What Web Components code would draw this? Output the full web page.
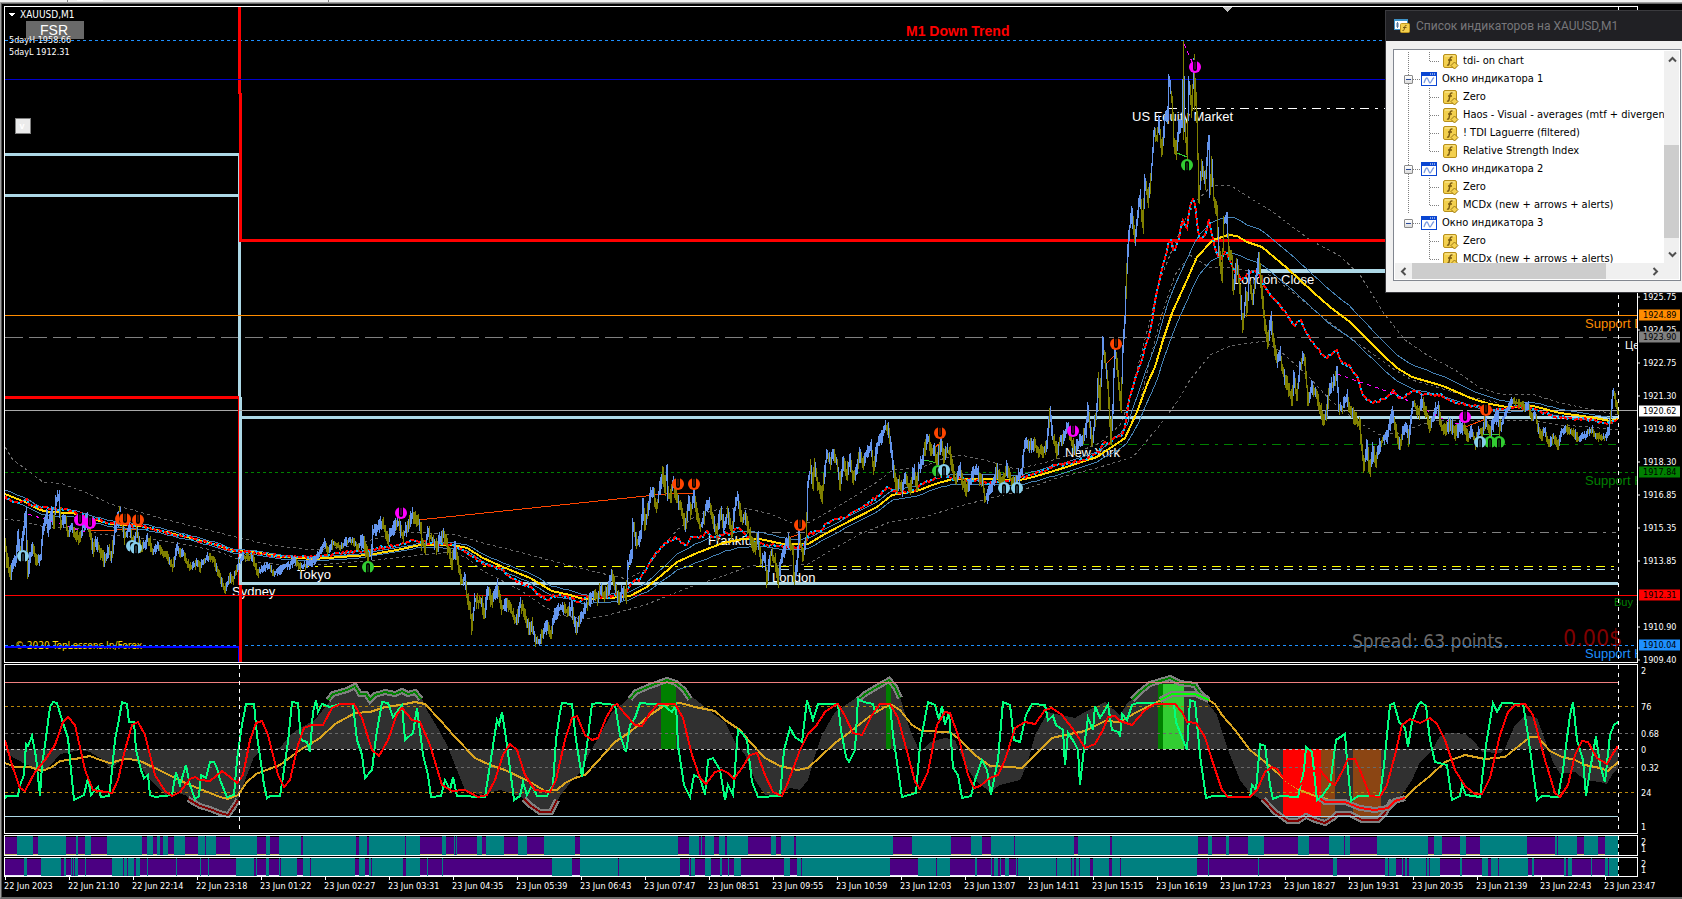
<!DOCTYPE html>
<html lang="ru">
<head>
<meta charset="utf-8">
<title>XAUUSD,M1</title>
<style>
html, body { margin: 0; height: 100%; background: #000; overflow: hidden; }
</style>
</head>
<body>
<trade-terminal></trade-terminal>
<script>
/* Every chart coordinate is a point of the chart space; panes take a window of it as "x y w h". */
const pts = s => s.trim().split(/\s+/).map(p => p.split(',').map(Number));
const line = (s, c, w = 1, dash = '') =>
  `<polyline points="${s}" fill="none" stroke="${c}" stroke-width="${w}" ${dash ? `stroke-dasharray="${dash}"` : ''}/>`;
const hl = (y, x1, x2, c, w = 1, dash = '') => line(`${x1},${w % 2 ? y + 0.5 : y} ${x2},${w % 2 ? y + 0.5 : y}`, c, w, dash);
const vl = (x, y1, y2, c, w = 1, dash = '') => line(`${w % 2 ? x + 0.5 : x},${y1} ${w % 2 ? x + 0.5 : x},${y2}`, c, w, dash);
const rnd = n => { const v = Math.sin(n * 127.1 + 11.7) * 43758.5453; return v - Math.floor(v); };
const at = (p, x) => {
  let i = 1;
  while (i < p.length - 1 && p[i][0] < x) i++;
  const [a, b] = [p[i - 1], p[i]];
  return { y: a[1] + (b[1] - a[1]) * (x - a[0]) / (b[0] - a[0] || 1), d: b[1] - a[1] };
};

const PRICE = `5,541 7,560 10,576 13,566 16,562 18,534 20,553 23,537 26,513 28,573 32,547 37,560 41,557 43,530 47,512 48,530 52,513 54,527 56,500 59,497 61,523 65,517 68,533 72,527 75,535 80,540 83,527 87,517 90,533 93,550 97,542 100,550 105,562 108,550 112,557 115,530 120,513 125,537 130,527 133,547 137,530 142,550 147,540 150,543 153,553 158,545 163,553 168,557 173,567 177,547 180,553 183,552 187,563 192,568 197,562 200,568 203,562 208,557 213,559 217,568 220,577 225,590 230,577 233,580 237,570 239,562 243,557 248,557 253,558 258,573 263,568 268,565 273,573 278,572 283,567 290,565 295,560 300,567 305,565 310,563 315,560 320,553 325,543 328,552 333,543 340,547 345,543 350,540 355,543 358,547 363,540 368,557 372,550 373,533 378,527 382,522 385,530 388,540 392,532 395,527 398,522 403,537 407,527 412,515 417,520 421,527 422,543 425,547 428,533 433,540 437,547 443,533 447,543 452,563 455,547 458,563 462,582 465,577 467,597 470,607 472,628 475,600 482,602 484,617 488,590 492,603 497,587 500,600 502,607 507,605 510,608 517,623 520,603 523,610 530,630 532,623 536,642 540,640 543,632 547,627 551,635 554,617 558,610 563,607 568,612 572,607 574,622 577,627 582,617 585,607 590,600 593,593 597,598 600,590 605,595 608,590 612,575 614,582 619,600 623,590 626,597 628,567 632,553 633,525 637,543 641,537 643,500 645,527 648,510 651,493 653,492 657,507 660,487 663,472 665,490 667,470 668,493 671,497 673,483 677,497 682,510 686,527 689,500 691,512 694,495 697,513 700,527 703,523 706,507 709,502 713,520 717,533 721,510 724,527 728,513 732,533 736,500 738,497 742,520 745,517 748,527 752,543 755,550 758,535 761,562 765,557 767,580 771,553 775,560 778,580 782,557 785,547 788,540 793,548 794,580 797,567 799,533 803,557 806,543 808,483 811,467 813,487 815,463 817,480 822,497 824,480
827,453 830,463 833,455 837,463 840,487 843,463 847,473 850,460 853,477 857,470 860,453 863,463 867,453 871,447 874,470 877,447 882,437 885,427 888,428 891,447 893,467 897,487 899,480 902,490 905,477 910,490 914,470 917,487 919,467 923,460 926,443 928,437 932,453 935,450 937,463 941,443 944,460 947,450 950,453 953,470 956,483 960,467 963,483 967,490 971,480 973,473 977,470 980,480 983,483 985,500 989,493 993,483 997,470 1000,480 1003,483 1007,467 1010,477 1013,483 1017,480 1022,470 1024,450 1027,443 1030,447 1033,443 1038,450 1043,452 1047,445 1050,413 1053,437 1057,452 1060,440 1064,437 1068,427 1071,440 1075,450 1079,443 1083,437 1086,430 1088,410 1090,423 1092,443 1095,423 1097,407 1098,380
1100,403 1103,343 1106,367 1108,387 1111,440 1113,407 1115,343 1118,373 1121,407 1123,350 1125,317 1127,267 1129,233 1132,213 1135,240 1137,220 1140,197 1143,227 1145,180 1148,200 1151,180 1154,133 1157,140 1159,123 1162,150 1165,120 1168,113 1169,77 1172,100 1174,140 1176,153 1179,127 1182,123 1183,83 1184,80 1185,127 1187,153 1189,83 1192,110 1194,65 1197,117 1199,197 1202,167 1205,183 1209,137 1210,193 1212,163 1214,200 1217,213 1219,250 1222,277 1224,223 1227,217 1229,253 1232,257 1233,290 1237,263 1240,290 1243,327 1246,293 1247,310 1249,277 1253,300 1256,277 1259,257 1262,293 1265,323 1268,343 1271,317 1273,340 1277,360 1280,353 1283,373 1287,383 1292,400 1294,377 1297,397 1300,367 1303,357 1305,360 1308,400 1312,387 1317,397 1320,407 1324,420 1327,410 1330,387 1333,383 1337,373 1339,410 1343,407 1347,397 1351,413 1355,417 1358,423
1360,423 1361,440 1364,467 1367,447 1370,472 1373,450 1376,462 1379,447 1383,440 1387,437 1390,423 1393,413 1395,427 1400,447 1403,433 1407,427 1409,440 1413,403 1416,408 1419,413 1422,402 1428,417 1430,427 1432,420 1435,410 1438,407 1442,427 1445,430 1450,423 1456,433 1462,426 1468,437 1472,433 1476,442 1479,430 1482,433 1486,420 1490,432 1494,423 1498,413 1500,430 1503,420 1507,410 1512,400 1517,403 1522,404 1525,408 1528,405 1532,417 1535,413 1538,427 1541,438 1545,430 1549,445 1553,437 1556,440 1558,447 1561,433 1565,428 1568,430 1573,432 1578,438 1583,437 1588,433 1592,430 1595,435 1602,438 1606,437 1609,430 1611,413 1613,395 1614,392 1616,403 1618,410`;

function candles() {
  const walk = pts(PRICE);
  let up = '', down = '';
  for (let x = 5; x <= 1618; x++) {
    const c = at(walk, x);
    const n = at(walk, x + 1).y;
    const calm = (x > 150 && x < 360) || x > 1500 ? 0.6 : 1;
    const hi = Math.min(c.y, n) - rnd(x) * 7 * calm - 1;
    const lo = Math.max(c.y, n) + rnd(x + 3000) * 7 * calm + 1;
    const rise = rnd(x + 900) < 0.12 ? c.d > 0 : c.d < 0;
    const seg = `M${x + 0.5} ${hi.toFixed(0)}V${lo.toFixed(0)}`;
    if (rise) up += seg; else down += seg;
  }
  down += 'M1183.5 41V140M1194.5 54V110';
  return `<path d="${up}" stroke="#6495ed" fill="none"/><path d="${down}" stroke="#808000" fill="none"/>`;
}

const MA = `5,494 20,500 25,502 40,510 50,512 72,513 110,524 140,526 187,537 217,545 233,551 253,552 283,557 313,559 368,555 397,550 420,545 453,545 467,548 483,558 503,567 530,578 552,591 570,595 583,599 610,598 630,596 647,587 662,575 677,562 697,553 723,543 743,539 760,539 783,544 808,544 825,534 840,526 877,507 892,495 917,491 935,484 953,479 983,479 1020,480 1033,477 1057,470 1097,457 1125,438 1137,412 1148,382 1155,367 1163,340 1172,313 1187,280 1197,257 1213,240 1228,235 1237,236 1247,242 1262,247 1287,268 1313,292 1330,307 1350,322 1383,355 1397,368 1412,377 1443,386 1473,399 1490,404 1507,407 1533,406 1560,413 1590,417 1610,421 1618,419`;
const SPREAD = `5,4 100,3 240,2 420,2 540,5 600,4 640,4 677,8 700,10 743,8 800,5 900,5 1000,5 1100,5 1125,8 1140,16 1170,22 1230,18 1262,17 1330,17 1412,12 1470,8 1530,4 1618,3`;
const band = k => {
  const m = pts(MA), s = pts(SPREAD);
  let out = '';
  for (let x = 5; x <= 1618; x += 6) out += `${x},${(at(m, x).y + k * at(s, x).y).toFixed(0)} `;
  return out;
};
const OUTER_UP = `5,447 13,460 27,470 43,482 63,484 87,493 110,504 133,510 160,518 200,528 240,538 270,545 313,550 345,547 368,541 397,532 430,533 457,535 483,543 523,553 560,563 600,573 627,579 645,570 660,550 677,530 697,515 720,509 745,508 770,514 790,522 808,523 835,508 860,493 877,482 893,470 920,468 945,458 960,455 985,460 1015,469 1040,464 1070,455 1100,443 1120,425 1128,405 1137,370 1150,320 1160,280 1172,250 1185,220 1197,200 1213,185 1230,185 1250,198 1270,210 1290,225 1310,240 1340,256 1360,275 1385,315 1405,340 1427,355 1455,370 1480,388 1500,394 1535,395 1560,403 1590,409 1618,415`;
const OUTER_LOW = `5,519 20,521 45,527 75,528 100,534 120,536 150,539 187,545 217,551 240,560 283,565 313,565 368,561 420,555 453,552 467,558 483,571 520,590 545,607 560,615 583,619 605,616 645,605 690,587 723,576 750,566 797,565 808,564 835,548 860,534 890,522 925,517 953,508 983,500 1020,491 1057,478 1097,468 1133,457 1160,425 1175,405 1190,380 1210,355 1230,346 1265,341 1285,355 1310,378 1330,400 1355,420 1380,435 1400,433 1420,425 1440,420 1480,421 1530,420 1560,425 1590,427 1618,430`;
const INNER = `1140,402 1150,360 1160,320 1175,275 1190,255 1210,268 1228,267 1245,270 1265,272 1290,290 1320,315 1345,334 1370,352 1395,370 1412,380 1440,388 1470,397 1500,403`;
const FAST = `5,497 12,501 20,503 27,500 30,505 42,508 55,508 70,511 85,515 108,523 140,526 187,537 217,545 233,551 253,553 283,557 313,557 345,553 368,551 380,548 400,544 415,540 420,542 435,543 455,546 470,556 485,564 500,568 515,580 530,587 538,595 550,600 553,596 573,597 577,602 590,597 610,597 625,592 632,583 640,579 650,562 657,553 665,543 675,538 686,546 692,536 700,538 707,532 715,538 727,532 730,535 737,528 745,533 752,542 757,542 765,546 780,545 785,548 792,546 797,548 805,544 810,533 820,531 828,522 835,519 842,518 855,511 867,504 877,497 888,486 897,493 915,491 922,484 930,480 945,475 953,479 973,480 987,483 995,481 1015,481 1030,475 1045,470 1050,467 1075,462 1095,455 1100,450 1104,441 1110,443 1114,436 1122,437 1125,425 1130,395 1137,375 1143,355 1152,325 1155,300 1163,265 1170,238 1174,252 1180,235 1182,218 1187,228 1190,205 1194,196 1199,238 1205,236 1209,220 1214,245 1220,260 1226,250 1233,268 1242,280 1250,272 1258,272 1266,289 1275,300 1287,314 1295,325 1300,319 1307,335 1315,345 1325,358 1337,349 1340,361 1350,366 1358,378 1363,396 1373,403 1387,398 1393,391 1400,399 1410,393 1415,391 1430,396 1440,395 1450,401 1465,404 1480,408 1500,410 1520,407 1540,411 1555,417 1585,419 1607,423 1618,419`;
const jagged = () => {
  const f = pts(FAST);
  let out = '';
  for (let x = 5; x <= 1618; x += 2) out += `${x},${(at(f, x).y + (rnd(x) - 0.5) * 3).toFixed(0)} `;
  return out;
};

/* Round arrow badge: the slot opens upwards for a sell mark, downwards for a buy mark. */
const mark = (x, y, c, dir) => `<g transform="translate(${x} ${y}) scale(1 ${dir})" style="shape-rendering:auto">
  <circle r="6" fill="${c}"/><path d="M-2 -7H2V2Q2 4 0 4Q-2 4 -2 2Z" fill="#000"/><path d="M0 -5V2" stroke="${c}" stroke-opacity=".5"/></g>`;
const marks = (c, dir, s) => pts(s).map(p => mark(p[0], p[1], c, dir)).join('');

const mainPlot = () => `
  ${hl(40, 5, 1637, '#1e90ff', 1, '3 3')}
  ${hl(472, 5, 1637, '#008000', 1, '3 3')}
  ${hl(645, 5, 1637, '#1e90ff', 1, '3 3')}
  ${hl(337, 5, 1637, '#808080', 1, '18 6')}
  ${hl(532, 748, 1616, '#808080', 1, '9 6 3 6')}
  ${hl(566, 300, 1614, '#ffff00', 1, '9 6 3 6')}
  ${hl(569, 780, 1614, '#add8e6', 1, '9 6 3 6')}
  ${hl(444, 1080, 1616, '#008000', 1, '9 6 3 6')}
  ${hl(108, 1168, 1637, '#ffffff', 1, '9 6 3 6')}
  ${line(OUTER_UP, '#696969', 1, '3 3')}${line(OUTER_LOW, '#696969', 1, '3 3')}${line(INNER, '#696969', 1, '3 3')}
  ${hl(154, 5, 240, '#add8e6', 3)}${hl(195, 5, 240, '#add8e6', 3)}
  ${vl(238, 154, 240, '#add8e6')}${vl(239, 240, 400, '#add8e6', 3)}${vl(240, 397, 585, '#add8e6', 3)}
  ${hl(417, 240, 1618, '#add8e6', 3)}${hl(583, 240, 1618, '#add8e6', 3)}${hl(271, 1258, 1637, '#add8e6', 4)}
  ${hl(410, 5, 1637, '#a9a9a9')}
  ${hl(397, 5, 239, '#ff0000', 3)}${vl(238, 397, 585, '#ff0000')}
  ${vl(239, 7, 94, '#ff0000', 3)}${vl(240, 93, 242, '#ff0000', 3)}${hl(240, 240, 1637, '#ff0000', 3)}
  ${hl(79, 5, 1637, '#0000cd')}
  ${hl(315, 5, 1637, '#ff8c00')}${hl(595, 5, 1637, '#ff0000')}
  ${hl(647, 5, 239, '#0000ff', 2)}${vl(238, 646, 662, '#0000ff')}${vl(240, 585, 662, '#ff0000', 3)}
  ${line('418,520 665,494 675,493 695,493', '#ff4500')}${line('90,531 115,530 139,529', '#ff4500')}
  ${line('28,514 85,532', '#ff00ff', 1, '4 4')}${line('1184,44 1194,66', '#ff00ff', 1, '4 4')}
  ${line('1337,374 1395,394 1445,420 1462,425', '#ff00ff', 1, '4 4')}
  ${line('924,460 938,463', '#32cd32')}${line('1177,153 1187,157', '#32cd32')}${line('1481,434 1500,434', '#32cd32')}
  ${line('1465,427 1486,419', '#ff4500')}${line('1107,363 1116,354', '#ff4500')}${line('934,448 940,443', '#ff4500')}${line('788,538 800,534', '#ff4500')}
  ${line(band(-1), '#4682b4')}${line(band(1), '#4682b4')}
  ${line(MA, '#ffd700', 2)}
  ${line(jagged(), '#00bfff', 2)}${line(jagged(), '#ff0000', 2, '4 2')}
  ${candles()}
  ${marks('#ff00ff', 1, '80,520 90,523 401,513 1195,67 1073,431 1465,417')}
  ${marks('#ff4500', 1, '121,519 125,519 138,520 678,484 694,484 800,525 940,433 1116,344 1486,410')}
  ${marks('#32cd32', -1, '368,567 938,471 1187,165 1490,442 1499,442')}
  ${marks('#87ceeb', -1, '23,556 132,546 136,548 944,470 1004,488 1017,488 1480,442')}
  <path d="M1223 7H1232L1227.5 12Z" fill="#c0c0c0"/>
  ${vl(1618, 7, 662, '#ffffff', 1, '4 4')}`;

const AREA = `5,750 9,755 18,760 25,764 36,768 40,772 50,766 60,754 70,752 80,750 90,752 100,758 108,766 112,768 118,763 125,758 135,760 143,770 150,780 165,795 175,792 185,795 190,800 205,806 227,814 235,806 240,795 247,775 254,757 262,750 280,748 290,735 300,728 315,720 325,707 333,697 355,686 365,695 370,700 385,693 400,694 420,694 427,710 440,732 447,745 455,765 465,790 480,795 500,790 520,796 530,806 545,812 553,808 560,796 570,783 580,772 590,752 600,735 612,712 625,702 635,690 650,685 668,679 680,683 690,695 700,703 715,715 725,722 735,742 745,755 755,780 765,795 780,795 790,788 800,790 808,780 815,755 822,735 835,712 850,702 865,692 888,680 900,697 910,730 920,752 930,742 945,738 955,740 965,765 975,780 990,792 1000,785 1020,780 1027,765 1035,735 1048,712 1060,715 1075,718 1085,712 1105,702 1120,715 1128,702 1140,695 1155,684 1170,678 1185,683 1197,686 1207,702 1217,715 1223,735 1230,755 1240,780 1250,793 1262,800 1275,812 1290,821 1305,816 1325,823 1335,815 1350,814 1365,822 1378,820 1388,808 1402,795 1412,780 1420,762 1432,750 1440,736 1450,733 1465,734 1475,742 1482,752 1500,753 1505,748 1515,725 1525,715 1537,718 1545,740 1553,762 1560,774 1575,772 1585,780 1600,782 1607,784 1612,775 1618,768`;
const GOLD = `5,763 15,767 30,767 42,771 52,767 60,761 75,759 90,756 100,760 110,763 125,759 138,760 155,768 175,778 190,785 205,791 220,797 228,799 238,795 247,782 256,774 280,765 300,750 320,738 335,724 355,713 370,712 385,707 400,705 415,702 425,704 440,720 455,737 475,758 490,765 505,770 530,782 545,791 557,790 565,783 575,778 585,775 597,762 615,742 630,732 650,715 665,705 680,703 695,707 715,711 725,720 740,730 750,742 765,758 780,766 797,770 808,768 820,757 835,743 850,732 870,716 885,707 892,705 900,710 912,725 922,731 950,732 960,740 975,755 990,766 1010,767 1022,768 1035,755 1052,738 1065,735 1085,731 1105,721 1120,722 1135,713 1155,703 1170,696 1195,694 1207,699 1215,704 1222,715 1235,730 1250,750 1270,766 1285,780 1300,790 1315,796 1330,800 1345,802 1362,808 1375,810 1390,804 1405,798 1415,788 1430,776 1445,762 1465,755 1485,759 1505,757 1520,745 1530,737 1538,737 1550,751 1562,757 1575,760 1585,765 1600,768 1608,771 1618,762`;
const SIGNAL = `5,740 12,765 20,788 25,791 35,772 45,760 55,745 63,722 68,717 75,725 85,770 93,790 112,793 118,780 125,750 132,725 138,722 145,735 155,775 165,791 172,796 180,792 190,779 195,777 200,780 210,781 222,771 230,777 237,783 243,775 250,740 256,723 262,721 268,735 278,775 284,787 290,780 298,745 304,728 312,725 323,725 332,708 340,704 354,704 362,718 372,750 379,756 388,740 397,714 402,708 412,720 420,722 430,745 442,785 452,791 465,790 478,797 487,795 495,780 503,755 510,744 517,750 525,775 535,790 550,792 556,780 565,740 572,718 577,716 585,735 592,740 598,738 606,718 613,706 617,704 625,714 635,725 642,726 650,713 658,704 675,704 683,718 692,755 700,778 706,784 715,772 722,770 728,773 734,779 742,768 750,755 757,753 765,775 773,792 782,796 787,785 800,750 808,734 816,726 825,712 835,705 838,704 845,716 853,733 862,735 872,715 880,704 890,704 898,718 908,755 915,782 920,789 928,772 937,725 945,712 950,713 958,735 968,775 974,788 980,786 990,778 998,775 1005,760 1015,728 1025,722 1035,724 1045,710 1052,708 1062,715 1075,732 1085,748 1095,744 1103,730 1108,717 1115,716 1120,721 1132,725 1145,710 1155,704 1175,704 1182,712 1187,722 1196,723 1205,737 1212,760 1222,790 1228,797 1250,797 1257,790 1265,772 1272,767 1277,769 1285,780 1298,788 1310,772 1320,770 1330,782 1335,785 1343,770 1348,759 1355,759 1362,775 1370,796 1380,797 1387,785 1395,755 1402,725 1410,719 1420,723 1430,718 1437,724 1445,740 1455,770 1465,786 1475,794 1482,794 1490,778 1500,735 1508,712 1515,705 1525,704 1533,715 1545,760 1555,793 1560,797 1568,785 1575,755 1582,741 1588,742 1597,758 1607,764 1612,755 1618,746`;
const TDI = `5,799 6,796 18,796 20,785 24,775 26,744 28,746 32,736 36,757 40,796 42,765 45,745 50,707 53,702 57,703 62,720 68,738 71,770 74,800 80,797 84,795 88,778 91,795 95,790 98,787 101,797 109,796 111,780 115,740 118,725 122,702 127,704 129,722 134,722 136,750 141,770 144,778 148,775 150,795 155,797 172,795 176,772 180,785 186,765 190,785 195,799 199,796 201,775 206,778 210,762 214,762 217,768 220,780 227,797 234,795 237,760 242,725 246,704 254,704 257,735 264,785 267,798 270,796 280,796 284,770 288,742 292,702 298,703 301,740 307,742 310,752 313,712 316,700 318,712 322,704 330,707 340,704 353,704 357,740 362,755 365,778 372,770 376,737 382,702 388,703 393,717 402,705 405,740 413,733 417,708 423,755 428,775 431,797 441,796 445,780 450,790 453,777 457,796 485,797 490,765 497,720 499,725 502,712 507,745 514,800 520,796 523,782 527,795 532,785 537,796 547,796 553,785 556,740 560,712 562,703 572,704 576,740 582,777 587,745 592,704 598,703 615,705 620,735 626,752 630,725 635,718 640,703 652,704 663,705 672,712 676,705 678,745 684,785 690,797 694,775 700,778 705,795 708,760 713,758 720,770 725,800 728,785 733,795 738,730 742,733 747,740 752,782 758,797 780,796 784,750 790,728 795,737 802,742 807,700 813,720 818,704 838,704 841,730 846,757 849,762 855,750 858,699 864,702 873,704 875,712 880,704 890,704 893,735 902,797 916,793 920,745 928,702 935,705 939,720 942,706 945,725 949,712 953,768 958,775 962,798 971,796 975,780 982,760 987,770 991,795 998,760 1003,702 1010,705 1014,740 1020,742 1026,715 1032,704 1045,705 1048,720 1053,716 1056,725 1063,730 1065,765 1068,733 1074,742 1078,750 1080,785 1085,740 1088,718 1093,730 1095,706 1100,718 1108,705 1112,730 1119,732 1120,737 1122,714 1127,720 1132,705 1137,703 1174,704 1176,722 1183,740 1187,750 1190,700 1195,702 1200,755 1206,798 1213,796 1250,797 1252,785 1256,790 1260,744 1265,746 1270,785 1273,799 1280,796 1298,797 1304,770 1306,747 1312,752 1317,800 1322,796 1330,785 1336,740 1345,734 1347,760 1351,801 1358,796 1380,796 1384,765 1390,705 1394,703 1399,722 1405,728 1408,747 1412,722 1418,705 1421,702 1426,706 1430,740 1435,762 1447,765 1452,800 1460,796 1462,785 1466,795 1480,797 1486,745 1493,703 1497,712 1502,703 1523,704 1528,735 1537,800 1542,796 1558,797 1563,770 1570,715 1573,702 1577,740 1583,760 1586,796 1590,770 1596,736 1600,765 1605,782 1610,735 1614,725 1618,722`;
const ridge = (s, c) => line(s, '#808080', 6) + line(s, c, 2);
const box = (x1, x2, y1, y2, c) => `<rect x="${x1}" y="${y1}" width="${x2 - x1}" height="${y2 - y1}" fill="${c}"/>`;
const oscPlot = () => `
  <polygon points="5,749 ${AREA} 1618,749" fill="#303030"/>
  ${box(661, 676, 682, 749, '#008000')}${box(886, 891, 682, 749, '#008000')}
  ${box(1158, 1163, 684, 749, '#008000')}${box(1163, 1184, 684, 749, '#32cd32')}
  ${box(1283, 1321, 749, 816, '#ff0000')}${box(1321, 1335, 749, 818, '#8b4513')}${box(1353, 1381, 749, 818, '#8b4513')}
  ${hl(706, 5, 1637, '#b8860b', 1, '3 3')}${hl(792, 5, 1637, '#b8860b', 1, '3 3')}
  ${hl(733, 5, 1637, '#696969', 1, '3 3')}${hl(767, 5, 1637, '#696969', 1, '3 3')}${hl(749, 5, 1637, '#c0c0c0', 1, '3 3')}
  ${line(GOLD, '#daa520', 2)}
  ${ridge('328,700 333,694 340,692 347,690 355,686 360,694 366,694 370,700 375,695 385,692 395,694 402,691 408,694 415,692 421,699', '#008000')}
  ${ridge('188,799 200,806 210,809 220,813 228,815 233,808 238,800', '#800000')}
  ${ridge('524,799 530,805 540,812 551,812 557,800', '#800000')}
  ${ridge('630,699 636,692 650,686 667,680 676,683 684,690 690,699', '#008000')}
  ${ridge('858,700 865,694 875,688 889,680 895,687 900,698', '#008000')}
  ${ridge('1132,700 1140,692 1150,684 1170,678 1180,683 1195,685 1200,693 1207,699', '#008000')}
  ${ridge('1160,700 1172,694 1195,694 1209,700', '#00ff00')}
  ${ridge('1263,799 1275,812 1288,821 1298,821 1306,816 1315,820 1325,823 1333,818 1337,814 1350,814 1362,820 1378,820 1385,813 1392,800', '#800000')}
  ${ridge('1318,797 1325,802 1345,802 1360,808 1375,810 1388,808 1395,801 1405,798', '#ff0000')}
  ${line(TDI, '#00ff7f', 2)}${line(SIGNAL, '#ff0000', 2)}
  ${hl(682, 5, 1618, '#f08080')}${hl(816, 5, 1618, '#add8e6')}
  ${vl(239, 665, 833, '#ffffff', 1, '4 4')}${vl(1618, 665, 833, '#ffffff', 1, '4 4')}`;

const ranges = s => s.trim().split(/\s+/).map(r => r.split('-').map(Number));
const BARS_A = `5-17 33-38 66-76 78-85 91-107 142-147 153-157 160-163 168-174 185-198 205-206 216-230 257-266 270-279 301-303 356-359 367-369 405-406 420-442 446-454 455-456 457-477 482-486 504-518 527-544 575-580 678-689 699-701 702-705 714-719 725-727 748-771 776-781 794-796 893-912 951-971 982-991 1014-1015 1074-1078 1110-1112 1198-1208 1212-1226 1229-1248 1264-1298 1309-1329 1344-1345 1350-1377 1428-1434 1442-1460 1466-1480 1527-1555 1557-1558 1577-1584 1598-1605`;
const BARS_B = `5-24 27-41 61-64 66-71 72-73 74-75 78-85 86-112 123-124 127-128 134-136 140-147 148-176 177-200 201-208 209-236 254-256 257-266 269-279 280-281 297-303 310-311 355-359 365-369 371-372 403-406 420-427 428-442 443-552 572-580 618-619 680-689 690-691 695-705 711-720 722-728 729-734 741-784 790-797 801-802 890-918 936-937 950-975 977-991 992-994 998-1000 1001-1005 1009-1016 1017-1018 1056-1057 1071-1072 1074-1076 1079-1080 1090-1093 1109-1112 1120-1121 1197-1208 1209-1258 1259-1333 1337-1385 1388-1389 1396-1402 1403-1405 1407-1409 1426-1427 1429-1430 1440-1460 1462-1482 1488-1491 1498-1499 1528-1532 1534-1564 1566-1568 1572-1591 1592-1605 1608-1609`;
const strip = (list, top, bottom, foot) => box(5, 1618, top, bottom, '#008080') +
  ranges(list).map(([a, b]) => box(a, b, top, top + 1, '#000') + box(a, b, top + 1, bottom, '#4b0082') +
    (b - a > 3 ? box(a, b, bottom - 1, bottom, foot) : '')).join('') + vl(1618, top, bottom, '#fff', 1, '4 4');

class ChartLabel extends HTMLElement {
  connectedCallback() {
    const root = this.attachShadow({ mode: 'open' });
    root.innerHTML = `<style>
      :host { position: absolute; transform: translateY(-50%); white-space: pre; line-height: 1; color: #fff;
        font-family: "Liberation Sans", Arial, sans-serif; font-size: 13px; }
      :host([kind="small"]), :host([kind="caption"]) { font-family: "DejaVu Sans Condensed", "DejaVu Sans", sans-serif; font-size: 9px; }
      :host([kind="caption"]) { font-size: 10px; }
      :host([kind="head"]) { font-weight: 700; font-size: 14px; }
      :host([kind="spread"]) { font-family: "DejaVu Sans Condensed", "DejaVu Sans", sans-serif; font-size: 19px; }
      :host([kind="profit"]) { font-family: "DejaVu Sans Condensed", "DejaVu Sans", sans-serif; font-size: 23px; }
      :host([kind="tiny"]) { font-size: 11px; }
    </style><slot></slot>`;
    const [x, y, w, h] = this.parentNode.getAttribute('view').split(' ').map(Number);
    this.style.left = (this.getAttribute('x') - x) / w * 100 + '%';
    this.style.top = (this.getAttribute('y') - y) / h * 100 + '%';
    if (this.hasAttribute('color')) this.style.color = this.getAttribute('color');
  }
}

class PriceTag extends HTMLElement {
  connectedCallback() {
    const root = this.attachShadow({ mode: 'open' });
    const tag = this.getAttribute('fill');
    const plain = this.hasAttribute('plain');
    root.innerHTML = `<style>
      :host { position: absolute; left: 0; right: 2px; height: 11px; transform: translateY(-50%); display: flex; align-items: center;
        font: 9px/11px "DejaVu Sans Condensed", "DejaVu Sans", sans-serif; color: #fff; }
      i { width: 2px; height: 1px; background: ${tag || plain ? 'transparent' : '#fff'}; margin-right: ${plain ? 1 : 3}px; flex: none; }
      span { white-space: nowrap; }
      :host([fill]) { background: ${tag}; margin-left: 1px; color: #000; }
      :host([fill]) i { width: 1px; }
    </style><i></i><span><slot></slot></span>`;
    const [, y, , h] = this.parentNode.getAttribute('view').split(' ').map(Number);
    this.style.top = (this.getAttribute('y') - y) / h * 100 + '%';
  }
}

class ChartPane extends HTMLElement {
  connectedCallback() {
    const view = this.getAttribute('view');
    const plots = { main: mainPlot, osc: oscPlot,
      a: () => strip(BARS_A, 836, 855, '#bdb76b'), b: () => strip(BARS_B, 858, 876, '#e6e6fa') };
    const root = this.attachShadow({ mode: 'open' });
    root.innerHTML = `<style>
      :host { display: grid; grid-template-columns: minmax(0, 1fr) 44px; min-height: 0; position: relative; }
      .plot { border: 1px solid #fff; position: relative; overflow: hidden; display: grid; min-width: 0; min-height: 0; }
      svg { width: 100%; height: 100%; display: block; position: relative; shape-rendering: crispEdges; pointer-events: none; min-height: 0; }
      svg * { vector-effect: non-scaling-stroke; }
      .axis { position: relative; margin: 1px 0; }
    </style>
    <div class="plot" view="${view}"></div><div class="axis" view="${view}"></div>`;
    const plot = root.querySelector('.plot'), axis = root.querySelector('.axis');
    plot.innerHTML = (this.labels || '') +
      `<svg viewBox="${view}" preserveAspectRatio="none" aria-hidden="true">${plots[this.getAttribute('plot')]()}</svg>` + (this.controls || '');
    axis.innerHTML = this.prices || '';
  }
}

class TimeAxis extends HTMLElement {
  connectedCallback() {
    const t = ['22 Jun 2023', '22 Jun 21:10', '22 Jun 22:14', '22 Jun 23:18', ...'01:22 02:27 03:31 04:35 05:39 06:43 07:47 08:51 09:55 10:59 12:03 13:07 14:11 15:15 16:19 17:23 18:27 19:31 20:35 21:39 22:43 23:47'.split(' ').map(s => '23 Jun ' + s)];
    this.attachShadow({ mode: 'open' }).innerHTML = `<style>
      :host { display: grid; grid-template-columns: repeat(25, 64fr) 78fr; color: #fff; height: 20px;
        font: 9px/11px "DejaVu Sans Condensed", "DejaVu Sans", sans-serif; }
      span { position: relative; padding-top: 4px; white-space: nowrap; min-width: 0; }
      span::before { content: ""; position: absolute; left: 1px; top: 0; width: 1px; height: 3px; background: #fff; }
    </style>` + t.map(s => `<span>${s}</span>`).join('');
  }
}

class TreeRow extends HTMLElement {
  connectedCallback() {
    const group = this.hasAttribute('group'), custom = !this.hasAttribute('builtin');
    const icon = group
      ? `<svg width="16" height="14" viewBox="0 0 16 14"><rect x=".5" y=".5" width="15" height="13" fill="#fff" stroke="#0a46d2"/><rect width="16" height="4" fill="#0a46d2"/><path d="M9 2h1M11 2h1M13 2h1" stroke="#fff"/><path d="M3 11C4 8 5 6 6 6S8 11 9 11S11 7 13 5.500" fill="none" stroke="#7b9be0" stroke-width="1.300"/></svg>`
      : `<svg width="16" height="15" viewBox="0 0 16 15"><rect x=".5" y=".5" width="13" height="13" rx="1.500" fill="#f3d04e" stroke="#b8901c"/><path d="M2 2H12" stroke="#fbeaa0"/><path d="M9.500 3.200C8 2.600 7.300 3.400 7 5L6 10C5.800 11 5 11.400 4 11M5 6H9" fill="none" stroke="#7a5a10" stroke-width="1.400"/>${custom ? '<path d="M11.500 8L15 11.500L11.500 15L8 11.500Z" fill="#f5d250" stroke="#9c7a18"/>' : ''}</svg>`;
    this.attachShadow({ mode: 'open' }).innerHTML = `<style>
      :host { display: flex; align-items: center; height: 18px; font: 11px/18px "DejaVu Sans Condensed", "DejaVu Sans", sans-serif; color: #000; white-space: nowrap; position: relative; padding-left: 9px; gap: 0; }
      .stem { flex: none; width: 9px; align-self: stretch; background: linear-gradient(#808080 50%, transparent 0) 4px 0 / 1px 2px repeat-y; display: flex; align-items: center; }
      button { flex: none; width: 9px; height: 9px; padding: 0; border: 1px solid #8a8a8a; border-radius: 1px; background: linear-gradient(#fff, #dcdcdc); display: grid; place-items: center; }
      button::before { content: ""; width: 5px; height: 1px; background: #2a4a9a; }
      .dots { flex: none; height: 1px; background: linear-gradient(90deg, #808080 50%, transparent 0) 0 0 / 2px 1px; }
      .g { width: 7px; margin-right: 1px; }
      .branch { flex: none; width: 1px; margin-left: 16px; align-self: stretch; background: linear-gradient(#808080 50%, transparent 0) 0 0 / 1px 2px; }
      :host([last]) .branch { height: 9px; align-self: flex-start; }
      .i { width: 10px; margin-right: 3px; }
      svg { flex: none; display: block; }
      .name { padding-left: ${group ? 5 : 4}px; }
      :host([nostem]) .stem { background: none; }
    </style>
    <span class="stem">${group ? '<button aria-label="Свернуть"></button>' : ''}</span>
    ${group ? '<span class="dots g"></span>' : '<span class="branch"></span><span class="dots i"></span>'}
    ${icon}<span class="name"><slot></slot></span>`;
  }
}

class ScrollBar extends HTMLElement {
  connectedCallback() {
    const v = this.hasAttribute('vertical');
    const arrow = d => `<svg width="9" height="9" viewBox="0 0 9 9"><path d="${d}" fill="none" stroke="#505050" stroke-width="2"/></svg>`;
    this.attachShadow({ mode: 'open' }).innerHTML = `<style>
      :host { display: flex; flex-direction: ${v ? 'column' : 'row'}; background: #f0f0f0; }
      button { flex: none; width: 17px; height: 17px; border: 0; padding: 0; background: none; display: grid; place-items: center; }
      .track { flex: 1; display: flex; flex-direction: ${v ? 'column' : 'row'}; }
      .track i { background: #cdcdcd; flex: ${v ? '93' : '192'}; }
      .pre { flex: ${v ? '77' : '0'}; } .post { flex: ${v ? '8' : '40'}; }
    </style>
    <button aria-label="Назад">${arrow(v ? 'M1 6.500L4.500 3L8 6.500' : 'M6.500 1L3 4.500L6.500 8')}</button>
    <div class="track"><div class="pre"></div><i></i><div class="post"></div></div>
    <button aria-label="Вперёд">${arrow(v ? 'M1 2.500L4.500 6L8 2.500' : 'M2.500 1L6 4.500L2.500 8')}</button>`;
  }
}

class IndicatorDialog extends HTMLElement {
  connectedCallback() {
    this.attachShadow({ mode: 'open' }).innerHTML = `<style>
      :host { position: absolute; top: 10px; right: 0; width: 297px; height: 283px; box-sizing: border-box; display: flex; flex-direction: column;
        background: #f0f0f0; border: solid #3a3a3e; border-width: 1px 0 1px 1px; }
      header { height: 30px; background: #202024; color: #77777b; display: flex; align-items: center; gap: 6px; padding-left: 8px; white-space: nowrap; overflow: hidden;
        font: 12px/30px Roboto, "Noto Sans", sans-serif; }
      header h1 { font: inherit; margin: 0; }
      .list { flex: 1; margin: 8px 1px 11px 7px; border: 1px solid #828790; background: #fff; display: grid; min-height: 0;
        grid-template-columns: minmax(0, 1fr) 15px; grid-template-rows: minmax(0, 1fr) 16px; padding: 1px; }
      .tree { overflow: hidden; padding-top: 1px; }
      .corner { background: #f0f0f0; }
    </style>
    <header><svg width="16" height="15" viewBox="0 0 16 15"><rect x=".5" y=".5" width="13" height="10" fill="#fff" stroke="#3f93c8"/><path d="M0 1H14" stroke="#3f93c8" stroke-width="2"/><path d="M3.500 3V9M2 5H5M2 7H5" stroke="#5a7aa0"/><rect x="6.500" y="4.500" width="9" height="9" rx="1" fill="#f3d04e" stroke="#c39a20"/><path d="M12.500 6.500C11 6 11 7 10.500 9S10 12 8.500 11.500M9 8.500H12.500" fill="none" stroke="#7a5a10"/></svg>
      <h1>Список индикаторов на XAUUSD,M1</h1></header>
    <div class="list"><div class="tree">
      <tree-row last>tdi- on chart</tree-row>
      <tree-row group>Окно индикатора 1</tree-row>
      <tree-row>Zero</tree-row>
      <tree-row>Haos - Visual - averages (mtf + divergence)</tree-row>
      <tree-row>! TDI Laguerre (filtered)</tree-row>
      <tree-row builtin last>Relative Strength Index</tree-row>
      <tree-row group>Окно индикатора 2</tree-row>
      <tree-row>Zero</tree-row>
      <tree-row last>MCDx (new + arrows + alerts)</tree-row>
      <tree-row group nostem>Окно индикатора 3</tree-row>
      <tree-row nostem>Zero</tree-row>
      <tree-row last nostem>MCDx (new + arrows + alerts)</tree-row>
    </div><scroll-bar vertical></scroll-bar><scroll-bar></scroll-bar><div class="corner"></div></div>`;
  }
}

class ChartButton extends HTMLElement {
  connectedCallback() {
    this.attachShadow({ mode: 'open' }).innerHTML = `<style>
      :host { position: absolute; }
      :host([kind="fsr"]) { left: 21px; top: 14px; width: 58px; height: 18px; }
      :host([kind="toggle"]) { left: 10px; top: 111px; width: 16px; height: 16px; }
      button { width: 100%; height: 100%; padding: 0 2px 0 0; border: 0; background: #696969; color: #fff; font: 14px/18px "Liberation Sans", Arial, sans-serif; display: block; }
      :host([kind="toggle"]) button { background: #ebebeb; border: 1px solid #808080; font: bold 9px/12px "Liberation Sans", sans-serif; color: #fff; }
    </style><button><slot></slot></button>`;
  }
}

class TradeTerminal extends HTMLElement {
  connectedCallback() {
    const L = (x, y, t, a = '') => `<chart-label x="${x}" y="${y}" ${a}>${t}</chart-label>`;
    const P = (y, t, a = '') => `<price-tag y="${y}" ${a}>${t}</price-tag>`;
    const root = this.attachShadow({ mode: 'open' });
    root.innerHTML = `<style>
      :host { display: flex; flex-direction: column; height: 100vh; position: relative; background: #000; overflow: hidden; box-sizing: border-box; }
      .bar { flex: none; height: 2px; background: #f0f0f0; display: flex; }
      .bar i { width: 1px; background: #808080; margin-left: 67px; }
      .bar b { width: 26px; background: #fff; margin-left: 9px; height: 1px; }
      .bar u { width: 1px; background: #808080; margin-left: 225px; }
      .frame { flex: 1; min-height: 0; border-top: 1px solid #a0a0a0; border-left: 1px solid #a0a0a0; border-bottom: 2px solid #696969; }
      .inner { height: 100%; box-sizing: border-box; border-top: 1px solid #696969; border-left: 1px solid #505050; padding: 2px 0 0 2px; display: flex; flex-direction: column; gap: 1px; }
      .p1 { flex: 657 1 0; } .p2 { flex: 170 1 0; } .p3 { flex: none; height: 21px; } .p4 { flex: none; height: 20px; }
      time-axis { margin-top: -1px; flex: none; }
    </style>
    <div class="bar"><i></i><b></b><u></u></div>
    <div class="frame"><div class="inner"></div></div>
    <indicator-dialog></indicator-dialog>`;
    const inner = root.querySelector('.inner');
    const pane = (cls, plot, view, labels, prices, controls) => {
      const p = document.createElement('chart-pane');
      p.className = cls;
      p.setAttribute('plot', plot);
      p.setAttribute('view', view);
      Object.assign(p, { labels, prices, controls });
      inner.append(p);
    };
    pane('p1', 'main', '5 7 1632 655',
      '<chart-button kind="fsr">FSR</chart-button><chart-button kind="toggle">v</chart-button>' +
      L(8, 15, '<svg width="8" height="5" viewBox="0 0 8 5" style="display:block"><path d="M0 0H8L4 4Z" fill="#fff"/></svg>') +
      L(20, 15, 'XAUUSD,M1', 'kind="caption"') + L(9, 40, '5dayH 1958.66', 'kind="small"') + L(9, 52, '5dayL 1912.31', 'kind="small"') +
      L(906, 31, 'M1 Down Trend', 'kind="head" color="#ff0000"') +
      L(1132, 116, 'US Equity Market') + L(1234, 279, 'London Close') + L(1065, 452, 'New York') +
      L(708, 540, 'Frankfurt') + L(772, 577, 'London') + L(297, 574, 'Tokyo') + L(232, 591, 'Sydney') +
      L(1585, 323, 'Support D1', 'color="#ff8c00"') + L(1585, 480, 'Support H1', 'color="#008000"') + L(1585, 653, 'Support H4', 'color="#1e90ff"') +
      L(1625, 345, 'Цель', 'kind="tiny"') + L(1614, 602, 'Buy Stop', 'kind="tiny" color="#008000"') +
      L(1352, 641, 'Spread: 63 points.', 'kind="spread" color="#696969"') + L(1563, 638, '0.00$', 'kind="profit" color="#800000"') +
      L(15, 646, '© 2020 TopLessons.In/Forex', 'kind="caption" color="#ffd700"'),
      [[297, '1925.75'], [330, '1924.25'], [363, '1922.75'], [396, '1921.30'], [429, '1919.80'], [462, '1918.30'], [495, '1916.85'], [528, '1915.35'], [561, '1913.85'], [627, '1910.90'], [660, '1909.40']].map(p => P(...p)).join('') +
      P(315, '1924.89', 'fill="#ff8c00"') + P(337, '1923.90', 'fill="#808080"') + P(411, '1920.62', 'fill="#ffffff"') +
      P(472, '1917.84', 'fill="#008000"') + P(595, '1912.31', 'fill="#ff0000"') + P(645, '1910.04', 'fill="#1e90ff"'));
    pane('p2', 'osc', '5 665 1632 168', '', P(671, '2', 'plain') + P(707, '76', 'plain') + P(734, '0.68', 'plain') + P(750, '0', 'plain') + P(768, '0.32', 'plain') + P(793, '24', 'plain') + P(827, '1', 'plain'));
    pane('p3', 'a', '5 836 1632 19', '', P(842, '2', 'plain') + P(849, '1', 'plain'));
    pane('p4', 'b', '5 858 1632 18', '', P(864, '2', 'plain') + P(870, '1', 'plain'));
    inner.append(document.createElement('time-axis'));
  }
}

customElements.define('chart-label', ChartLabel);
customElements.define('price-tag', PriceTag);
customElements.define('chart-button', ChartButton);
customElements.define('chart-pane', ChartPane);
customElements.define('time-axis', TimeAxis);
customElements.define('tree-row', TreeRow);
customElements.define('scroll-bar', ScrollBar);
customElements.define('indicator-dialog', IndicatorDialog);
customElements.define('trade-terminal', TradeTerminal);
</script>
</body>
</html>
